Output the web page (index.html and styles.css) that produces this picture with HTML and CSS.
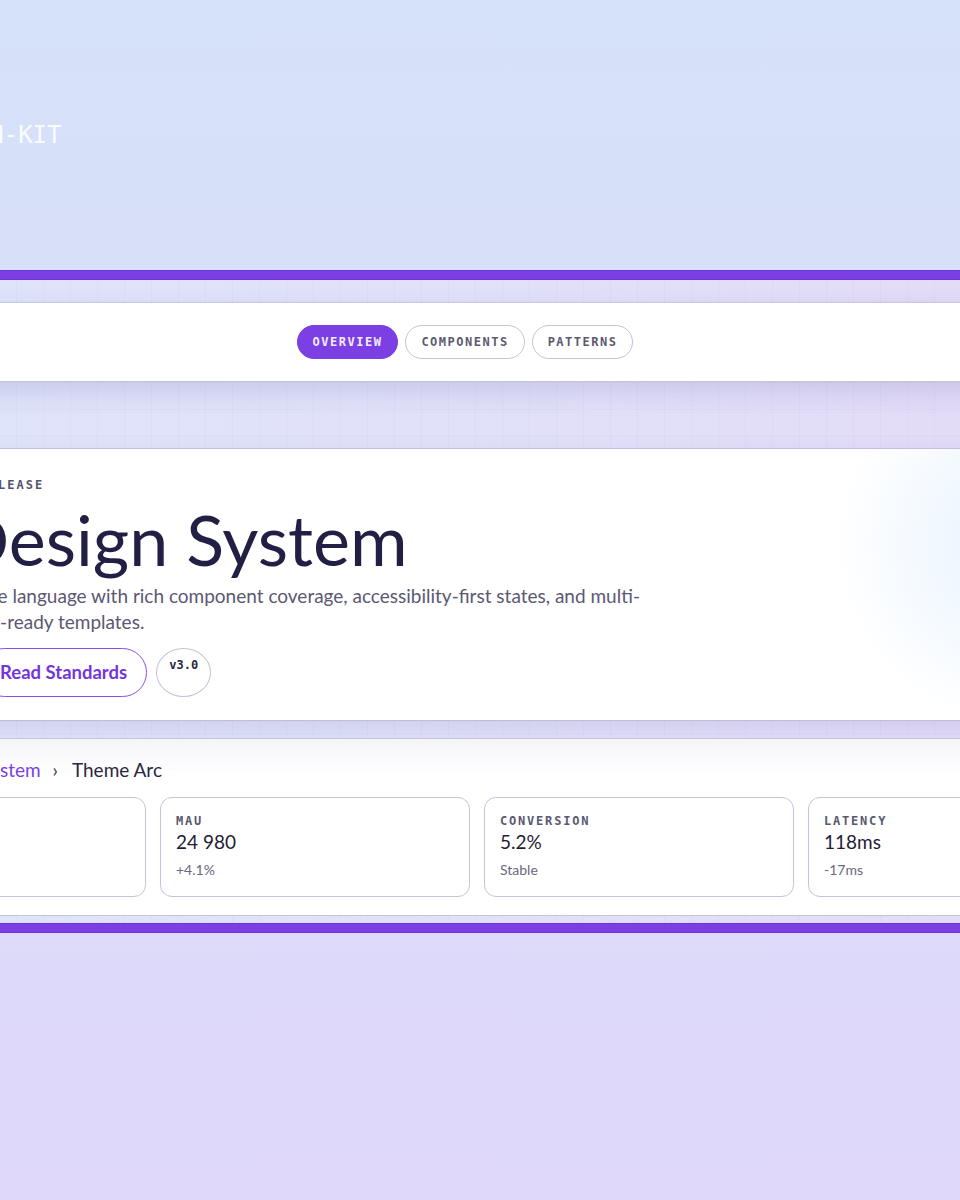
FILE: index.html
```html
<!DOCTYPE html>
<html>
	<head>
		<meta charset="UTF-8">
		<title>Design System</title>
		<link rel="stylesheet" href="styles.css">
	</head>
	<body>
		<div class="frame">
			<header class="top">
				<div class="brand">DESIGN-KIT</div>
			</header>
			<div class="bar"></div>

			<main class="stage">
				<nav class="tabs">
					<a class="tab active" href="#">OVERVIEW</a>
					<a class="tab" href="#">COMPONENTS</a>
					<a class="tab" href="#">PATTERNS</a>
				</nav>

				<section class="hero">
					<p class="eyebrow">V3 RELEASE</p>
					<h1 class="title">Design System</h1>
					<p class="lead">Simple language with rich component coverage, accessibility-first states, and multi-brand-ready templates.</p>
					<div class="actions">
						<a class="btn" href="#">Read Standards</a>
						<span class="version">v3.0</span>
					</div>
				</section>

				<section class="panel">
					<div class="crumbs">
						<a href="#">Home</a>
						<span class="sep">›</span>
						<a href="#">Design System</a>
						<span class="sep">›</span>
						<span class="current">Theme Arc</span>
					</div>
					<ul class="stats">
						<li class="card">
							<span class="label">SESSIONS</span>
							<span class="value">1.2M</span>
							<span class="delta">+8.6%</span>
						</li>
						<li class="card">
							<span class="label">MAU</span>
							<span class="value">24 980</span>
							<span class="delta">+4.1%</span>
						</li>
						<li class="card">
							<span class="label">CONVERSION</span>
							<span class="value">5.2%</span>
							<span class="delta">Stable</span>
						</li>
						<li class="card">
							<span class="label">LATENCY</span>
							<span class="value">118ms</span>
							<span class="delta">-17ms</span>
						</li>
					</ul>
				</section>
			</main>
			<div class="bar"></div>
		</div>
	</body>
</html>
```

FILE: styles.css
```css
*{
	margin: 0;
	padding: 0;
	box-sizing: border-box;
}
ul,li{
	list-style: none;
}
a{
	text-decoration: none;
	color: inherit;
}
body{
	min-height: 1200px;
	overflow: hidden;
	background: linear-gradient(180deg, #d6e2f9 0%, #dadcf9 45%, #dfd8fa 100%);
	font-family: Lato, "Noto Sans", sans-serif;
	color: #221f3f;
}

/* the page is wider than the window and sits shifted to the left */
.frame{
	width: 1354px;
	margin-left: -200px;
}

.top{
	height: 270px;
	padding: 121px 0 0 117px;
}
.brand{
	font: 24px/28px "DejaVu Sans Mono", monospace;
	color: rgba(255,255,255,.9);
}

.bar{
	height: 10px;
	background: #7b3fe4;
	border-top: 1px solid #6c36d2;
	border-bottom: 1px solid #6c36d2;
}

.stage{
	padding: 22px 0 7px;
	background:
		repeating-linear-gradient(90deg, rgba(110,110,180,.045) 0 1px, transparent 1px 27px),
		repeating-linear-gradient(0deg, rgba(110,110,180,.035) 0 1px, transparent 1px 27px),
		linear-gradient(90deg, #dfe5fa 0%, #e1e1f9 50%, #e4daf7 100%);
}

/* tabs */
.tabs{
	height: 80px;
	padding-right: 24px;
	display: flex;
	justify-content: center;
	align-items: center;
	gap: 7px;
	background: #fff;
	border-top: 1px solid #cbc7de;
	border-bottom: 1px solid #c6c2da;
	box-shadow: 0 10px 26px rgba(70,70,140,.16);
}
.tab{
	height: 34px;
	padding: 0 15px;
	border: 1px solid #c6c2d9;
	border-radius: 17px;
	font: bold 12px/32px "DejaVu Sans Mono", monospace;
	letter-spacing: 1.5px;
	color: #5c5a70;
}
.tab.active{
	background: #7b3fe4;
	border-color: #7b3fe4;
	color: #f3ecff;
}

/* hero */
.hero{
	margin-top: 66px;
	height: 273px;
	padding: 28px 0 0 152px;
	background:
		radial-gradient(circle at 1215px 95px, #e4f1fd 0, rgba(232,243,255,.65) 70px, rgba(255,255,255,0) 180px),
		#fff;
	border-top: 1px solid #c5bfdd;
	border-bottom: 1px solid #c2bbdb;
	box-shadow: 0 8px 22px rgba(70,70,140,.12);
}
.eyebrow{
	font: bold 12px/16px "DejaVu Sans Mono", monospace;
	letter-spacing: 2px;
	color: #56546c;
}
.title{
	margin-top: 11px;
	padding-left: 4px;
	font-size: 70px;
	font-weight: 400;
	line-height: 70px;
	color: #221f45;
}
.lead{
	margin-top: 9px;
	max-width: 720px;
	font-size: 19px;
	line-height: 26px;
	color: #5b5872;
}
.actions{
	margin-top: 13px;
	margin-left: 28px;
	display: flex;
	gap: 9px;
}
.btn{
	height: 49px;
	padding: 0 19px;
	border: 1.5px solid #8750e2;
	border-radius: 25px;
	font-size: 18.5px;
	font-weight: 700;
	line-height: 46px;
	color: #7436dc;
}
.version{
	width: 55px;
	height: 49px;
	padding-top: 8px;
	border: 1px solid #c6c2d6;
	border-radius: 50%;
	text-align: center;
	font: bold 12px/16px "DejaVu Sans Mono", monospace;
	color: #2a2840;
}

/* bottom panel */
.panel{
	margin-top: 17px;
	padding: 19px 36px 18px;
	background: linear-gradient(180deg, #f5f5f9 0, #fff 36px);
	border-top: 1px solid #c9c6da;
	border-bottom: 1px solid #c7c4d6;
}
.crumbs{
	display: flex;
	align-items: center;
	gap: 12px;
	font-size: 19px;
	line-height: 24px;
	color: #2a2840;
}
.crumbs a{
	color: #7b3fe4;
}
.crumbs .sep{
	margin-right: 2px;
	color: #3a3850;
}
.stats{
	margin-top: 15px;
	display: grid;
	grid-template-columns: repeat(4, 1fr);
	gap: 14px;
}
.card{
	height: 100px;
	padding: 15px 15px;
	display: flex;
	flex-direction: column;
	border: 1px solid #c7c3da;
	border-radius: 12px;
	background: #fff;
}
.label{
	font: bold 12px/16px "DejaVu Sans Mono", monospace;
	letter-spacing: 1.8px;
	color: #5a5870;
}
.value{
	margin-top: 2px;
	font-size: 19px;
	line-height: 22px;
	color: #1f1d35;
}
.delta{
	margin-top: 8px;
	font-size: 14px;
	line-height: 18px;
	color: #6a6880;
}
```
